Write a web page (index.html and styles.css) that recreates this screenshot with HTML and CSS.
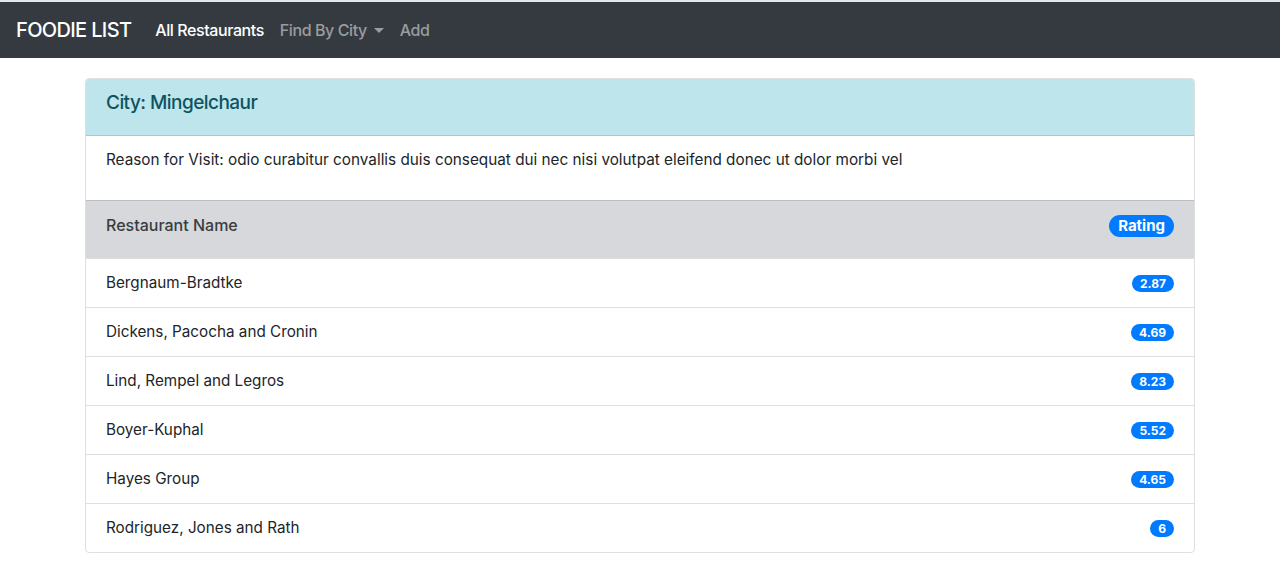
FILE: index.html
```html
<!DOCTYPE html>
<html lang="en">
<head>
<meta charset="utf-8">
<title>Foodie List</title>
<link rel="stylesheet" href="styles.css">
</head>
<body>
<nav class="navbar">
  <a class="brand" href="#">FOODIE LIST</a>
  <ul class="nav">
    <li><a class="nav-link active" href="#">All Restaurants</a></li>
    <li><a class="nav-link dropdown" href="#">Find By City<span class="caret"></span></a></li>
    <li><a class="nav-link" href="#">Add</a></li>
  </ul>
</nav>
<main class="container">
  <div class="card">
    <div class="card-header">
      <h5 class="city">City: Mingelchaur</h5>
    </div>
    <div class="card-body">
      <p class="reason">Reason for Visit: odio curabitur convallis duis consequat dui nec nisi volutpat eleifend donec ut dolor morbi vel</p>
    </div>
    <ul class="list">
      <li class="item head"><span>Restaurant Name</span><span class="badge badge-lg">Rating</span></li>
      <li class="item"><span>Bergnaum-Bradtke</span><span class="badge">2.87</span></li>
      <li class="item"><span>Dickens, Pacocha and Cronin</span><span class="badge">4.69</span></li>
      <li class="item"><span>Lind, Rempel and Legros</span><span class="badge">8.23</span></li>
      <li class="item"><span>Boyer-Kuphal</span><span class="badge">5.52</span></li>
      <li class="item"><span>Hayes Group</span><span class="badge">4.65</span></li>
      <li class="item"><span>Rodriguez, Jones and Rath</span><span class="badge">6</span></li>
    </ul>
  </div>
</main>
</body>
</html>
```
FILE: styles.css
```css
* { box-sizing: border-box; }
html, body { margin: 0; padding: 0; }
body {
  font-family: Inter, "Liberation Sans", Arial, sans-serif;
  font-size: 16px;
  line-height: 1.5;
  color: #212529;
  background: #fff;
  border-top: 2px solid #e6e7e9;
}
.navbar {
  display: flex;
  align-items: center;
  height: 56px;
  padding: 8px 16px;
  background: #343a40;
}
.brand {
  color: #fff;
  text-decoration: none;
  font-size: 20px;
  line-height: 30px;
  margin-right: 16px;
  font-weight: 500;
  letter-spacing: -0.65px;
}
.nav {
  display: flex;
  list-style: none;
  margin: 0;
  padding: 0;
}
.nav-link {
  display: flex;
  align-items: center;
  padding: 8px 8px;
  color: rgba(255,255,255,.5);
  text-decoration: none;
  font-size: 16px;
  font-weight: 500;
  letter-spacing: -0.42px;
}
.nav-link.active { color: #fff; }
.caret {
  display: inline-block;
  margin-left: 7px;
  width: 0; height: 0;
  border-top: 5px solid rgba(255,255,255,.5);
  border-left: 5px solid transparent;
  border-right: 5px solid transparent;
}
.container {
  width: 1140px;
  margin: 20px auto 0;
  padding: 0 15px;
}
.card {
  border: 1px solid rgba(0,0,0,.125);
  border-radius: 4px;
  overflow: hidden;
}
.card-header {
  background: #bee5eb;
  color: #0c5460;
  padding: 12px 20px;
  border-bottom: 1px solid rgba(0,0,0,.125);
}
.city {
  margin: 0 0 8px;
  font-size: 19px;
  font-weight: 500;
  line-height: 24px;
  letter-spacing: -0.55px;
}
.card-body { padding: 12px 20px; }
.reason { margin: 0 0 16px; font-size: 15.3px; line-height: 24px; }
.list { list-style: none; margin: 0; padding: 0; }
.item {
  display: flex;
  justify-content: space-between;
  align-items: center;
  padding: 12px 20px;
  border-top: 1px solid rgba(0,0,0,.125);
  height: 49px;
  font-size: 15.25px;
  line-height: 24px;
}
.item.head {
  background: #d6d8db;
  color: #383d41;
  height: 58px;
  padding-bottom: 21px;
  font-size: 16px;
  font-weight: 500;
}
.badge {
  display: inline-block;
  background: #007bff;
  color: #fff;
  font-weight: 700;
  font-size: 12px;
  line-height: 1;
  padding: 3px 8px 2px;
  border-radius: 10rem;
  height: 17px;
}
.badge-lg { font-size: 15px; padding: 3px 9px; height: 22px; margin-top: 2px; }
```
